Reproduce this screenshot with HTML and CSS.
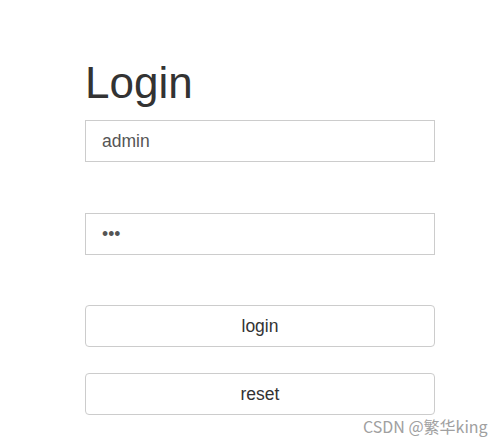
FILE: index.html
```html
<!DOCTYPE html>
<html>
<head>
<meta charset="utf-8">
<link rel="stylesheet" href="styles.css">
</head>
<body>
<div class="page">
  <form class="login-form">
    <h1 class="title">Login</h1>
    <input class="field" type="text" value="admin">
    <input class="field field-pass" type="password" value="123">
    <button class="btn btn-login" type="button">login</button>
    <button class="btn btn-reset" type="button">reset</button>
  </form>
  <div class="watermark">CSDN @繁华king</div>
</div>
</body>
</html>
```
FILE: styles.css
```css
html, body {
  margin: 0;
  padding: 0;
  background: #fff;
}
.page {
  position: relative;
  width: 504px;
  height: 446px;
  overflow: hidden;
  font-family: "Liberation Sans", Arial, sans-serif;
}
.login-form {
  display: flex;
  flex-direction: column;
  width: 350px;
  padding: 58px 0 0 85px;
}
.title {
  margin: 0 0 12px 0;
  font-size: 44px;
  line-height: 50px;
  font-weight: 400;
  color: #333;
}
.field {
  box-sizing: border-box;
  height: 42px;
  width: 350px;
  margin: 0;
  padding: 0 16px;
  border: 1px solid #ccc;
  border-radius: 0;
  font-family: "Liberation Sans", Arial, sans-serif;
  font-size: 17.5px;
  color: #555;
  background: #fff;
  outline: none;
}
.field-pass {
  margin-top: 51px;
}
.btn {
  box-sizing: border-box;
  height: 42px;
  width: 350px;
  margin: 0;
  padding: 0;
  border: 1px solid #ccc;
  border-radius: 4px;
  background: #fff;
  font-family: "Liberation Sans", Arial, sans-serif;
  font-size: 17.5px;
  color: #333;
}
.btn-login {
  margin-top: 50px;
}
.btn-reset {
  margin-top: 26px;
}
.watermark {
  position: absolute;
  left: 363px;
  top: 414px;
  font-family: "Noto Sans CJK SC", "Noto Sans", sans-serif;
  font-size: 16px;
  line-height: 24px;
  letter-spacing: 0;
  color: #a0a0a0;
  white-space: nowrap;
}
```
